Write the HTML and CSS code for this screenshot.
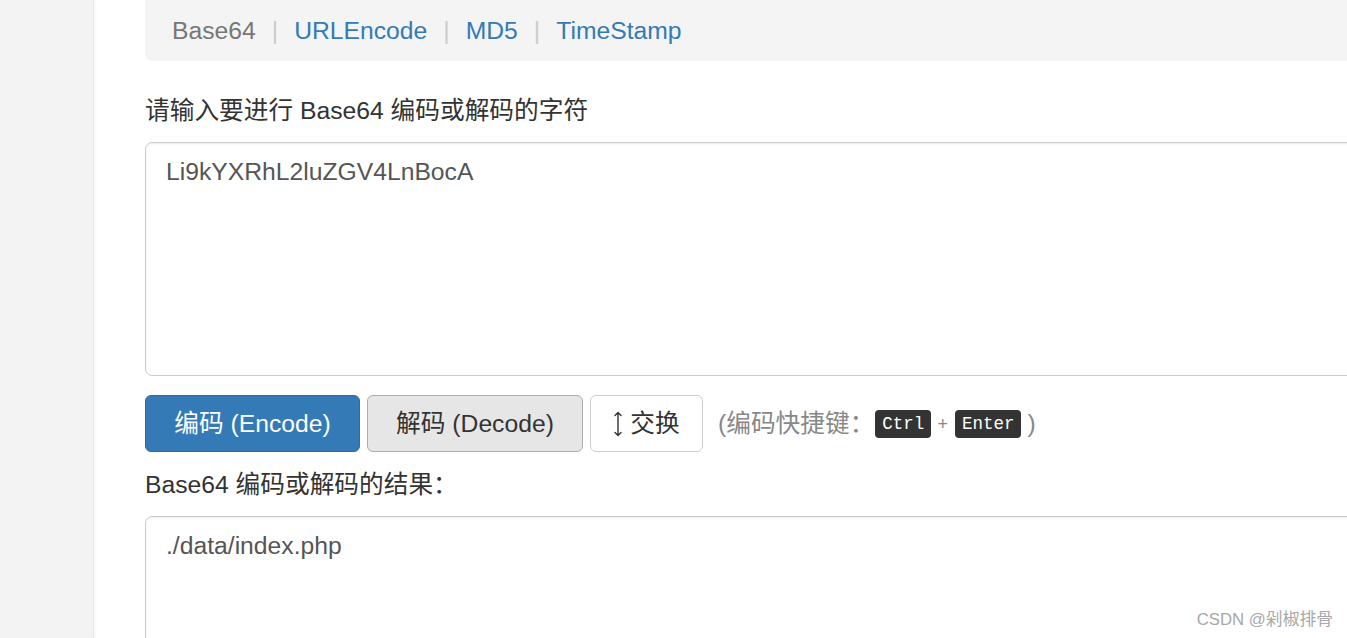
FILE: index.html
```html
<!DOCTYPE html>
<html lang="zh-CN">
<head>
<meta charset="utf-8">
<title>Base64 编码解码</title>
<link rel="stylesheet" href="styles.css">
</head>
<body>
<div class="page">
  <aside class="sidebar"></aside>
  <main class="main">
    <nav class="tabs">
      <span class="tab active">Base64</span>
      <span class="sep">|</span>
      <a class="tab" href="#">URLEncode</a>
      <span class="sep">|</span>
      <a class="tab" href="#">MD5</a>
      <span class="sep">|</span>
      <a class="tab" href="#">TimeStamp</a>
    </nav>

    <label class="label first">请输入要进行 Base64 编码或解码的字符</label>
    <div class="field field-in">Li9kYXRhL2luZGV4LnBocA</div>

    <div class="actions">
      <button class="btn btn-primary">编码 (Encode)</button>
      <button class="btn btn-active">解码 (Decode)</button>
      <button class="btn btn-plain">
        <svg class="swap-icon" width="10" height="26" viewBox="0 0 10 26" aria-hidden="true">
          <path d="M5 1.5 V24.5 M2 4.5 L5 1.5 L8 4.5 M2 21.5 L5 24.5 L8 21.5" fill="none" stroke="#333" stroke-width="1.4" stroke-linecap="round" stroke-linejoin="round"/>
        </svg>
        <span>交换</span>
      </button>
      <span class="hint">(编码快捷键：<kbd>Ctrl</kbd><span class="plus">+</span><kbd>Enter</kbd><span class="close">)</span></span>
    </div>

    <label class="label second">Base64 编码或解码的结果：</label>
    <div class="field field-out">./data/index.php</div>
  </main>
</div>
<div class="watermark">CSDN @剁椒排骨</div>
</body>
</html>
```

FILE: styles.css
```css
html, body {
  margin: 0;
  padding: 0;
  height: 100%;
  overflow: hidden;
  background: #ffffff;
}

body {
  font-family: "Liberation Sans", Arial, "Noto Sans CJK SC", sans-serif;
  font-size: 24.7px;
  line-height: 36px;
  color: #333333;
}

.page {
  display: flex;
  height: 638px;
}

.sidebar {
  flex: 0 0 93px;
  background: #f3f3f3;
  border-right: 1px solid #e6e6e6;
  box-shadow: 1px 0 3px rgba(0, 0, 0, 0.05);
}

.main {
  flex: 1;
  min-width: 0;
  padding-left: 51px;
  overflow: hidden;
}

.tabs {
  display: flex;
  align-items: center;
  height: 61px;
  padding-left: 27px;
  width: 1400px;
  background: #f4f4f4;
  border-radius: 0 0 0 7px;
}

.tab {
  color: #337ab7;
  text-decoration: none;
}

.tab.active {
  color: #777777;
}

.sep {
  color: #cccccc;
  margin: 0 16px 0 16px;
}

.label {
  display: block;
  color: #333333;
}

.label.first {
  margin-top: 32px;
}

.label.second {
  margin-top: 15px;
}

.field {
  margin-top: 13px;
  width: 1400px;
  box-sizing: border-box;
  border: 1px solid #cccccc;
  border-radius: 7px;
  box-shadow: inset 0 1px 2px rgba(0, 0, 0, 0.08);
  padding: 11px 20px;
  color: #555555;
  background: #ffffff;
}

.field-in {
  height: 234px;
}

.field-out {
  height: 200px;
}

.actions {
  display: flex;
  align-items: center;
  margin-top: 19px;
  gap: 7px;
}

.btn {
  font-family: inherit;
  font-size: 24.7px;
  line-height: 36px;
  height: 57px;
  box-sizing: border-box;
  border-radius: 6px;
  border: 1px solid #cccccc;
  padding: 0 20px;
  display: flex;
  align-items: center;
  justify-content: center;
  cursor: pointer;
}

.btn-primary {
  width: 215px;
  background: #337ab7;
  border-color: #2e6da4;
  color: #ffffff;
}

.btn-active {
  width: 216px;
  background: #e6e6e6;
  border-color: #adadad;
  color: #333333;
}

.btn-plain {
  width: 113px;
  background: #ffffff;
  color: #333333;
  gap: 7px;
  padding: 0 16px;
}

.swap-icon {
  display: block;
  flex: 0 0 auto;
}

.hint {
  margin-left: 8px;
  color: #888888;
  display: flex;
  align-items: center;
}

kbd {
  display: inline-block;
  font-family: "Liberation Mono", "DejaVu Sans Mono", monospace;
  font-size: 17.5px;
  line-height: 28px;
  height: 28px;
  padding: 0 7px;
  margin-left: 1px;
  background: #333333;
  color: #ffffff;
  border-radius: 4px;
}

.plus {
  font-size: 18px;
  margin: 0 6px 0 6px;
  color: #888888;
}

.close {
  margin-left: 6px;
}

.watermark {
  position: absolute;
  right: 14px;
  bottom: 6px;
  font-family: "Liberation Sans", Arial, "Noto Sans CJK SC", sans-serif;
  font-size: 16.8px;
  line-height: 24px;
  color: #a8a8a8;
  text-shadow: 0 0 2px #ffffff;
}
```
